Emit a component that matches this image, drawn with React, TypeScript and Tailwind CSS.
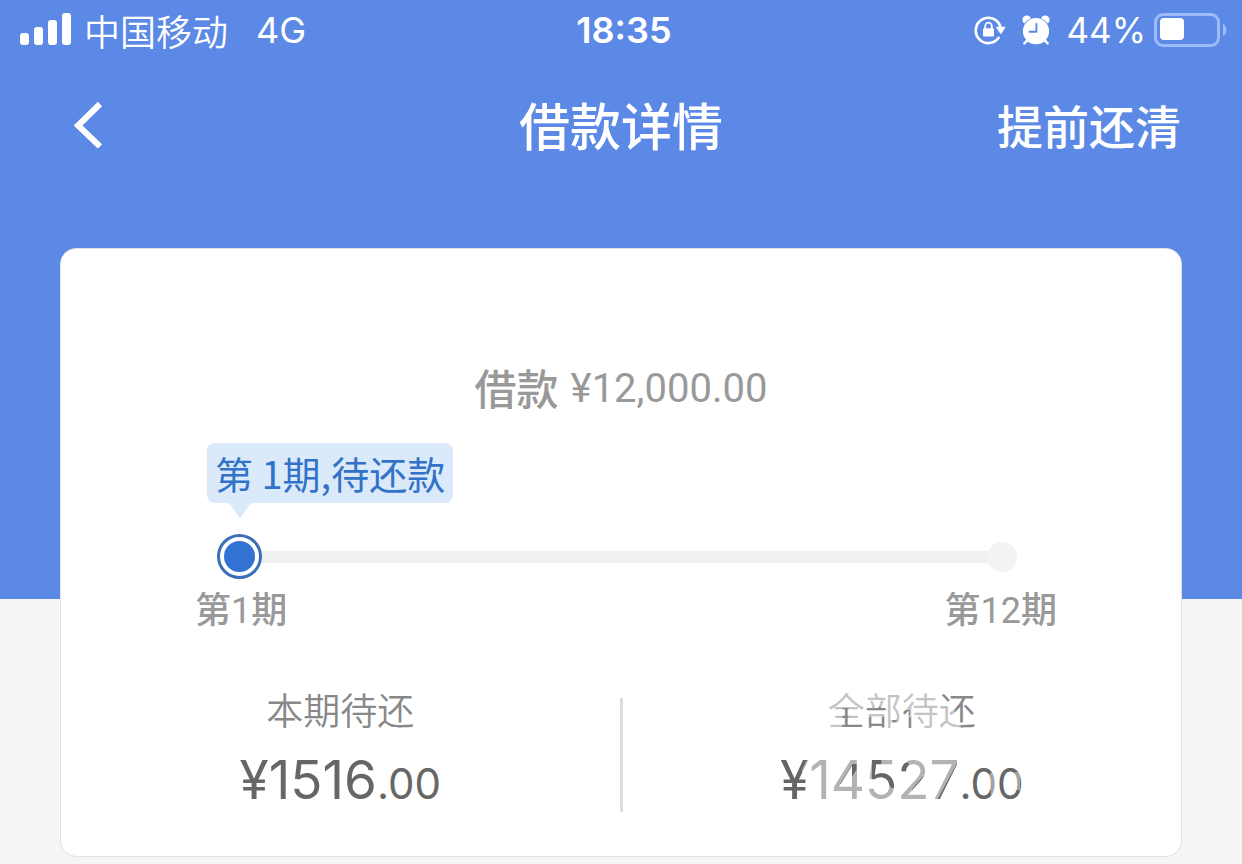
import React from "react";

function SignalIcon() {
  return (
    <svg width="52" height="34" viewBox="0 0 52 34" fill="#fff" aria-hidden="true">
      <rect x="0" y="20" width="9" height="12" rx="3" />
      <rect x="14" y="14" width="9" height="18" rx="3" />
      <rect x="28" y="7" width="9" height="25" rx="3" />
      <rect x="42" y="0" width="9" height="32" rx="3" />
    </svg>
  );
}

function RotationLockIcon() {
  return (
    <svg width="32" height="30" viewBox="0 0 32 30" aria-hidden="true">
      <path d="M24.6 22.8A12.6 12.6 0 1 1 26.2 11.2" fill="none" stroke="#fff" strokeWidth="2.6" strokeLinecap="round" />
      <path d="M22.6 12.2h8.4l-4.2 6.6z" fill="#fff" stroke="#fff" strokeWidth="1" strokeLinejoin="round" />
      <rect x="9" y="13.2" width="11" height="8.2" rx="1.2" fill="#fff" />
      <path d="M11.2 14v-2.7a3.3 3.6 0 0 1 6.6 0V14" fill="none" stroke="#fff" strokeWidth="1.8" />
    </svg>
  );
}

function AlarmIcon() {
  return (
    <svg width="28" height="30" viewBox="0 0 28 30" aria-hidden="true">
      <circle cx="4.8" cy="4.8" r="4.4" fill="#fff" />
      <circle cx="23.2" cy="4.8" r="4.4" fill="#fff" />
      <circle cx="14" cy="16.4" r="14" fill="#5c89e6" />
      <path d="M5.2 25.4l-2.8 3M22.8 25.4l2.8 3" stroke="#fff" strokeWidth="2.4" strokeLinecap="round" />
      <circle cx="14" cy="16.2" r="13.1" fill="#fff" />
      <path d="M14.4 9v7.8H7.6" fill="none" stroke="#5c89e6" strokeWidth="1.9" strokeLinecap="round" strokeLinejoin="round" />
    </svg>
  );
}

function BatteryIcon() {
  return (
    <svg width="74" height="34" viewBox="0 0 74 34" aria-hidden="true">
      <rect x="1.5" y="1.5" width="63" height="31" rx="7.5" fill="none" stroke="#9dbafa" strokeWidth="3" />
      <path d="M69 11.2c4.6 1.4 4.6 10.2 0 11.6z" fill="#9dbafa" />
      <rect x="6" y="5" width="24" height="22" rx="4" fill="#fff" />
    </svg>
  );
}

function StatusBar() {
  return (
    <div className="grid h-[60px] grid-cols-[1fr_auto_1fr] items-center pr-[14px] pl-5 font-[Inter,'Noto_Sans_CJK_SC',sans-serif] text-4xl leading-none text-white">
      <div className="flex items-center gap-3">
        <SignalIcon />
        <span className="font-['Noto_Sans_CJK_SC',sans-serif] font-[350]">中国移动</span>
        <span className="ml-4">4G</span>
      </div>
      <time className="font-semibold">18:35</time>
      <div className="flex items-center justify-end gap-4">
        <RotationLockIcon />
        <AlarmIcon />
        <div className="flex items-center gap-2">
          <span className="text-[35px]">44%</span>
          <BatteryIcon />
        </div>
      </div>
    </div>
  );
}

function NavBar() {
  return (
    <nav className="grid h-[128px] grid-cols-[1fr_auto_1fr] items-center px-[61px] font-['Noto_Sans_CJK_SC',sans-serif] font-medium text-white">
      <button type="button" aria-label="返回" className="justify-self-start pl-3">
        <svg width="32" height="48" viewBox="0 0 32 48" aria-hidden="true">
          <path d="M27 4L5 25.5l22 21" fill="none" stroke="#fff" strokeWidth="6" />
        </svg>
      </button>
      <h1 className="text-[51px] leading-none font-medium">借款详情</h1>
      <button type="button" className="justify-self-end text-[46px] leading-none">提前还清</button>
    </nav>
  );
}

function Schedule() {
  return (
    <section className="mt-6 pr-[124px] pl-[134px]">
      <div className="ml-3 w-fit">
        <p className="flex h-[60px] items-center rounded-lg bg-[#dbeafa] px-2 font-['Noto_Sans_CJK_SC',sans-serif] text-[38px] leading-none text-[#3272c8]">
          第 1期,待还款
        </p>
        <svg className="ml-[22px] block" width="22" height="15" viewBox="0 0 22 15" aria-hidden="true">
          <path d="M0 0h22L11 15z" fill="#dbeafa" />
        </svg>
      </div>
      <div className="mt-4 mr-[40px] ml-[22px] flex items-center">
        <span className="flex size-[45px] items-center justify-center rounded-full border-3 border-[#3b6fb8] bg-white">
          <span className="size-[31px] rounded-full bg-[#3272d2]" />
        </span>
        <span className="h-3 flex-1 bg-[#f0f0f0]" />
        <span className="-ml-2 size-[30px] rounded-full bg-[#f3f3f3]" />
      </div>
      <div className="mt-2 flex justify-between font-[Roboto,'Noto_Sans_CJK_SC',sans-serif] text-4xl leading-[48px] font-medium text-[#999]">
        <span>第<span className="font-normal">1</span>期</span>
        <span>第<span className="font-normal">12</span>期</span>
      </div>
    </section>
  );
}

function LabelVeil() {
  return (
    <svg className="pointer-events-none absolute top-0 left-0" width="148" height="48" viewBox="202 16 444 144" aria-hidden="true">
      <path
        fill="#fff"
        fillOpacity="0.5"
        fillRule="evenodd"
        d="M200 10H540V75H582V130H600V162H200ZM245 82h18v60h-18ZM263 126h42v16h-42ZM318 78h56v14h-56ZM322 108h50v34h-50ZM388 117h20v14h-20ZM428 88h20v17h-20ZM442 110h14v32h-14Z"
      />
    </svg>
  );
}

function AmountVeil() {
  return (
    <svg className="pointer-events-none absolute top-0 left-0" width="240" height="60" viewBox="60 210 720 180" aria-hidden="true">
      <path
        fill="#fff"
        fillOpacity="0.5"
        fillRule="evenodd"
        d="M148 225H604L534 356V370H155V290H126V270ZM240 312L278 252H292V240H306V318H290V268L262 312ZM336 235H364V280H384L414 296V324H394L380 300H336ZM424 248H446V274H424ZM456 328L490 288L508 296L478 340H456Z"
      />
      <path fill="#fff" fillOpacity="0.4" d="M684 285L716 262V330L694 350ZM765 275H785V330H765Z" />
    </svg>
  );
}

function Amount({ label, whole, veiled = false }: { label: string; whole: string; veiled?: boolean }) {
  return (
    <div className="flex flex-col items-center">
      <dt className="relative font-['Noto_Sans_CJK_SC',sans-serif] text-[37px] leading-[46px] font-[350] text-[#888]">
        {label}
        {veiled && <LabelVeil />}
      </dt>
      <dd className="relative mt-[18px] font-[Inter,sans-serif] text-[53px] leading-[60px] text-[#666]">
        ¥{whole}
        <span className="text-[42px]">.00</span>
        {veiled && <AmountVeil />}
      </dd>
    </div>
  );
}

export default function App() {
  return (
    <div className="min-h-screen bg-[#f5f5f5] pb-[7px]">
      <header className="h-[599px] bg-[#5c89e6]">
        <StatusBar />
        <NavBar />
      </header>
      <main className="-mt-[351px] px-[60px]">
        <article className="rounded-2xl border border-[#e2e2e2] bg-white pt-[110px] pb-[42px]">
          <h2 className="flex items-center justify-center gap-3 text-[42px] leading-[60px] text-[#999]">
            <span className="pb-1 font-['Noto_Sans_CJK_SC',sans-serif] leading-[56px] font-medium">借款</span>
            <span className="font-[Roboto,sans-serif] text-[40px]">¥12,000.00</span>
          </h2>
          <Schedule />
          <dl className="mt-[51px] grid grid-cols-[1fr_3px_1fr]">
            <Amount label="本期待还" whole="1516" />
            <div className="mt-3 h-[114px] bg-[#ddd]" />
            <Amount label="全部待还" whole="14527" veiled />
          </dl>
        </article>
      </main>
    </div>
  );
}
